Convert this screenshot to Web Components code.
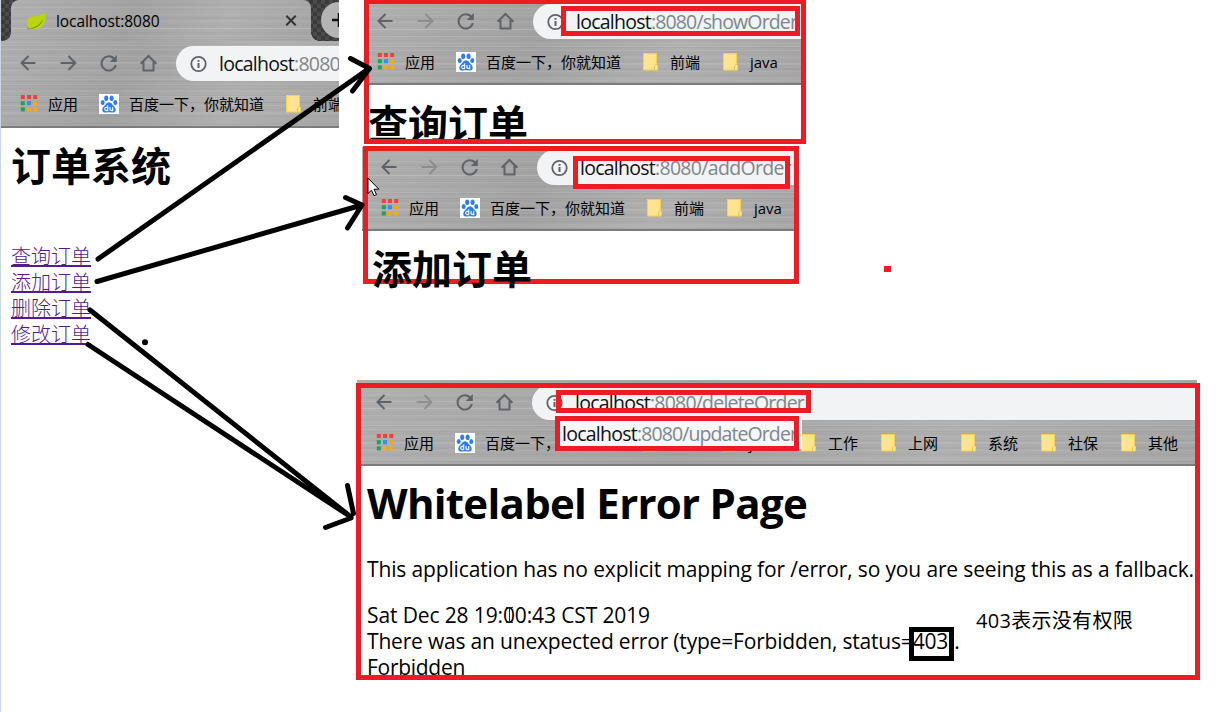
<!DOCTYPE html>
<html lang="zh">
<head>
<meta charset="utf-8">
<title>订单系统</title>
<style>
html,body{margin:0;background:#fff}
body{width:1216px;height:712px;overflow:hidden;font-family:"Open Sans","Noto Sans CJK SC",sans-serif;color:#000}
</style>
</head>
<body>
<order-board></order-board>
<script>
const define=(name,html,setup)=>{
  const t=document.createElement('template');t.innerHTML=html;
  customElements.define(name,class extends HTMLElement{
    connectedCallback(){
      if(this.shadowRoot)return;
      this.attachShadow({mode:'open'}).append(t.content.cloneNode(true));
      if(setup)setup(this,this.shadowRoot);
    }
  });
};

/* Spaces its text so that it spans the given width */
define('fit-text','<style>:host{display:inline-block;white-space:pre}span{display:inline-block}</style><span><slot></slot></span>',(el,r)=>{
  const s=r.querySelector('span'),w=+el.getAttribute('w');
  if(!w)return;
  const n=[...el.textContent].length;
  s.style.letterSpacing=(w-s.getBoundingClientRect().width)/n+'px';
});

const icons={
 back:'<path d="M17.500 10H4M10.500 3L3.500 10 10.500 17" stroke="currentColor" stroke-width="2" fill="none"/>',
 forward:'<path d="M2.500 10H16.500M10.500 3L17.300 10 10.500 17" stroke="currentColor" stroke-width="2" fill="none"/>',
 reload:'<path d="M16.500 6A7.200 7.200 0 1 0 17.800 12" stroke="currentColor" stroke-width="2" fill="none"/><path d="M18.800 2v7h-7z" fill="currentColor"/>',
 home:'<path d="M2.600 10.800L10.500 3l7.900 7.800M5.500 9v8.500h10V9" stroke="currentColor" stroke-width="2" fill="none"/>',
 info:'<circle cx="10.500" cy="10" r="7.200" stroke="currentColor" stroke-width="1.800" fill="none"/><path d="M10.500 9v5M10.500 6v1.800" stroke="currentColor" stroke-width="2"/>',
 close:'<path d="M5.300 4.800l9.400 9.400M14.700 4.800l-9.400 9.400" stroke="currentColor" stroke-width="2"/>',
 apps:[0,1,2].flatMap(y=>[0,1,2].map(x=>`<rect x="${2.800+x*6.200}" y="${1+y*6.200}" width="4" height="4" fill="${['#f33f3a','#f33f3a','#f33f3a','#22a05a','#2e90fa','#fca908','#22a05a','#fca908','#fca908'][y*3+x]}"/>`)).join(''),
 baidu:'<rect width="20" height="20" fill="#fff"/><g fill="#2b7cf6"><ellipse cx="7.200" cy="4.300" rx="2" ry="2.800"/><ellipse cx="12.600" cy="4.300" rx="2" ry="2.800"/><ellipse cx="3.700" cy="8.600" rx="2" ry="2.500"/><ellipse cx="16.300" cy="8.600" rx="2" ry="2.500"/><path d="M10 8.200C7.500 8.200 7 10.500 5 12.200 2.500 14.300 2.600 18.600 6.300 18.600c1.500 0 2-.4 3.700-.4s2.200.4 3.700.4c3.700 0 3.800-4.300 1.300-6.400-2-1.700-2.500-4-5-4z"/></g><path d="M8.700 11.200v5.500M8.700 13.400H7.300a1.600 1.600 0 0 0 0 3.200h1.400M11 13v2.600c0 1 .6 1 2.700 1V13" fill="none" stroke="#fff" stroke-width="1.100"/>',
 folder:'<path d="M2.500 1.500h13v11l1 1v4.500H2.500z" fill="#fee391" stroke="#fbd04e"/><path d="M13.500 18v-4l2-1.500" fill="none" stroke="#f7c744"/>',
 leaf:'<path d="M19 1C20 8 19.500 15 13 17.500 9 19 5 18 3 16.500-1 11 1 6 8 5.200 13 4.600 16 4.500 19 1z" fill="#bcd40d"/><path d="M1.500 17.500C9 17 14 14 17 7.500 16 15 8 19 1.500 17.500z" fill="#6d9a0b"/><path d="M1 16.500l2 2" stroke="#6d9a0b"/>'
};
define('ui-icon','<style>:host{display:block;width:20px;height:20px;flex:none}svg{display:block;width:100%;height:100%;overflow:visible}</style><svg viewBox="0 0 20 20"></svg>',(el,r)=>{
  r.querySelector('svg').innerHTML=icons[el.getAttribute('name')];
});

/* Navigation icons and the address field */
define('address-bar',`<style>
:host{display:flex;height:35px;color:#5f6368}
.nav{display:flex;gap:20px;padding:7px 18px 8px;flex:none;box-sizing:border-box;width:176px}
.field{flex:1;min-width:0;background:#f1f3f4;border-radius:18px 0 0 18px;display:flex;align-items:center;padding-left:12px}
.url{margin-left:11px;white-space:nowrap;display:flex}
:host([dim]) .fwd{opacity:.4}
</style><div class="nav"><ui-icon name="back"></ui-icon><ui-icon class="fwd" name="forward"></ui-icon><ui-icon name="reload"></ui-icon><ui-icon name="home"></ui-icon></div>
<div class="field"><ui-icon name="info"></ui-icon><div class="url"><slot></slot></div></div>`);

define('page-url',`<style>:host{display:flex;font:19.500px/26px "Open Sans",sans-serif;white-space:nowrap;color:#80868b}.h{color:#111}</style><fit-text class="h" w="75">localhost</fit-text><fit-text class="p"></fit-text>`,(el,r)=>{
  const p=r.querySelector('.p'),f=document.createElement('fit-text');
  f.textContent=el.getAttribute('path');f.setAttribute('w',el.getAttribute('w'));
  p.replaceWith(f);
});

define('book-mark',`<style>:host{display:flex;align-items:center;gap:var(--gap,10px);font:15px/20px "Open Sans","Noto Sans CJK SC",sans-serif;white-space:nowrap;flex:none}</style><ui-icon></ui-icon><slot></slot>`,(el,r)=>{
  const i=document.createElement('ui-icon');i.setAttribute('name',el.getAttribute('icon'));
  r.querySelector('ui-icon').replaceWith(i);
});

define('bookmark-bar',`<style>
:host{display:flex;height:46px;align-items:center;padding-left:18px;box-sizing:border-box;border-bottom:2px solid #7c7c7c}
book-mark{width:80px}
.apps{width:81px}.bd{width:185px}
.f{--gap:9px}
</style><book-mark class="apps" icon="apps">应用</book-mark><book-mark class="bd" icon="baidu">百度一下，你就知道</book-mark><slot></slot>`,(el,r)=>{
  el.getAttribute('folders').split(' ').forEach(n=>{
    const b=document.createElement('book-mark');b.className='f';b.setAttribute('icon','folder');b.textContent=n;
    if(n==='java')b.style.width='79px';
    r.append(b);
  });
});

const metal=`background-color:#a9a9a9;background-image:
repeating-linear-gradient(180deg,rgba(255,255,255,.07) 0 1px,transparent 1px 4px,rgba(0,0,0,.03) 4px 5px,transparent 5px 7px),
repeating-linear-gradient(180deg,rgba(0,0,0,.03) 0 1px,transparent 1px 11px,rgba(255,255,255,.1) 11px 12px,transparent 12px 17px),
linear-gradient(115deg,rgba(255,255,255,.08),rgba(0,0,0,.04) 40%,rgba(255,255,255,.08) 70%,rgba(0,0,0,.02));`;

/* A cropped piece of a browser window */
define('browser-clip',`<style>
:host{display:block;overflow:hidden}
.chrome{${metal}display:flex;flex-direction:column;overflow:hidden}
.row{margin-left:var(--shift,0px);display:flex;flex-direction:column;gap:var(--bar-gap,0px)}
</style><div class="chrome"><slot name="tabs"></slot><div class="row"><slot name="bar"></slot><slot name="marks"></slot></div></div><slot></slot>`);

define('tab-strip',`<style>
:host{display:flex;height:41px;box-sizing:border-box;background:#444 repeating-conic-gradient(#3a3a3a 0 25%,#4b4b4b 0 50%) 0 0/8px 8px;padding-left:10px;overflow:hidden}
.tab{${metal}position:relative;width:300px;flex:none;box-sizing:border-box;border-radius:8px 8px 0 0;display:flex;align-items:center;padding:0 10px 0 15px;font:15.500px/20px "Open Sans",sans-serif}
.tab::before,.tab::after{content:"";position:absolute;bottom:0;width:8px;height:8px}
.tab::before{left:-8px;background:radial-gradient(circle at 0 0,transparent 7.500px,#adadad 8px)}
.tab::after{right:-8px;background:radial-gradient(circle at 100% 0,transparent 7.500px,#adadad 8px)}
fit-text{margin-left:10px}
.x{margin-left:auto;color:#333}
.new{margin:2px 0 0 10px;width:36px;height:36px;flex:none;border-radius:50%;background:#b4b4b4;display:grid;place-items:center}
</style><div class="tab"><ui-icon name="leaf"></ui-icon><fit-text w="103.500">localhost:8080</fit-text><ui-icon class="x" name="close"></ui-icon></div>
<div class="new"><svg width="16" height="16"><path d="M8 1v14M1 8h14" stroke="#111" stroke-width="2.500"/></svg></div>`);

define('mark-frame','<style>:host{display:block;box-sizing:border-box;border:5px solid var(--ink,#ed1c24)}</style><slot></slot>');

define('order-links',`<style>:host{display:flex;flex-direction:column;align-items:flex-start}
a{font:300 20px/26px "Noto Sans CJK SC",sans-serif;color:#551a8b;text-decoration:none;height:26px;background:linear-gradient(#551a8b,#551a8b) 0 22px/100% 2px no-repeat}
</style><a>查询订单</a><a>添加订单</a><a>删除订单</a><a>修改订单</a>`);

define('ink-layer',`<style>:host{display:block;pointer-events:none}svg{display:block}</style>
<svg width="1216" height="712" fill="none" stroke="#000" stroke-width="5" stroke-linecap="round" stroke-linejoin="round">
<path d="M98 259L369 68.500M350.500 58.500L369.500 68.500L352.500 91"/>
<path d="M97 281.500L362 205M345.500 197.500L362 205L347.500 228"/>
<path d="M90 310L351 517M88 344.500L351 517M347.500 485.500L353.500 513.500M325.500 527.500L351 518"/>
<circle cx="145" cy="342.300" r="3" fill="#000" stroke="none"/>
<rect x="884" y="266" width="7" height="6" fill="#ed1c24" stroke="none"/>
<path d="M368 178.500v15l3.500-3.300 2.500 5.500 2.500-1-2.500-5.500h4.500z" fill="#fff" stroke="#000" stroke-width="1"/>
<path d="M506.500 607.500h2l1 1 1-1h2M509.500 608v14M506.500 622.500h2l1-1 1 1h2" stroke="#222" stroke-width="1"/>
</svg>`);

define('error-page',`<style>:host{display:flex;flex-direction:column;align-items:flex-start;padding-left:10px;font:21px/26px "Open Sans",sans-serif}
h1{margin:8px 0 0;font:700 42px/57px "Open Sans",sans-serif;height:57px}
p{margin:25px 0 20px}
fit-text,p{display:block}
</style><h1><fit-text w="440">Whitelabel Error Page</fit-text></h1><p><fit-text w="827">This application has no explicit mapping for /error, so you are seeing this as a fallback.</fit-text></p>
<fit-text w="283">Sat Dec 28 19:00:43 CST 2019</fit-text><fit-text w="592.500">There was an unexpected error (type=Forbidden, status=403).</fit-text><fit-text w="98">Forbidden</fit-text>`);

define('order-board',`<style>
:host{display:block;position:relative;width:1216px;height:712px;overflow:hidden;background:#fff}
:host>*{position:absolute}
.edge{left:0;top:0;width:1px;height:712px;background:#c9d6e6}
h1{margin:0;font:700 40px/50px "Noto Sans CJK SC",sans-serif;white-space:nowrap}
.a{left:1px;top:0;width:338px;height:360px;--bar-gap:1px;--shift:-1px}
.a address-bar{margin-top:5px}
.a h1{margin:11px 0 0 10px}
.a order-links{margin:54px 0 0 10px}
.b{left:366px;top:1px;width:436px;height:138px;--shift:-9px;--bar-gap:1px}
.b address-bar{margin-top:3px}
.b h1{margin:12px 0 0 2px}
.c{left:362px;top:147px;width:437px;height:143px;--shift:-1px;--bar-gap:1px}
.c address-bar{margin-top:3px}
.d{left:357px;top:380px;width:840px;height:297px;--shift:-1px;--bar-gap:1px}
.d address-bar{margin-top:5px}
.b bookmark-bar,.c bookmark-bar,.d bookmark-bar{height:45px}
.patch{left:556px;top:418px;width:246px;height:31px;background:#f4f6f8;overflow:hidden}
.patch page-url{margin:3px 0 0 6px}
.note{left:976px;top:607px;font:20px/28px "Open Sans","Noto Sans CJK SC",sans-serif}
</style>
<div class="edge"></div>
<browser-clip class="a"><tab-strip slot="tabs"></tab-strip><address-bar slot="bar"><page-url path=":8080" w="46"></page-url></address-bar><bookmark-bar slot="marks" folders="前端"></bookmark-bar><h1>订单系统</h1><order-links></order-links></browser-clip>
<browser-clip class="b"><address-bar dim slot="bar"><page-url path=":8080/showOrder" w="146"></page-url></address-bar><bookmark-bar slot="marks" folders="前端 java"></bookmark-bar><h1>查询订单</h1></browser-clip>
<mark-frame style="left:364px;top:-1px;width:442px;height:145px"></mark-frame>
<mark-frame style="left:561px;top:6px;width:239px;height:30px"></mark-frame>
<browser-clip class="c"><address-bar dim slot="bar"><page-url path=":8080/addOrder" w="136"></page-url></address-bar><bookmark-bar slot="marks" folders="前端 java"></bookmark-bar></browser-clip>
<mark-frame style="left:363px;top:146px;width:436px;height:138px"></mark-frame>
<h1 style="left:372px;top:242px;height:47px;overflow:hidden">添加订单</h1>
<mark-frame style="left:573px;top:156px;width:217px;height:33px"></mark-frame>
<browser-clip class="d"><address-bar dim slot="bar"><page-url path=":8080/deleteOrder" w="154"></page-url></address-bar><bookmark-bar slot="marks" folders="前端 java 工作 上网 系统 社保 其他"></bookmark-bar><error-page></error-page></browser-clip>
<mark-frame style="left:356px;top:383px;width:844px;height:297px"></mark-frame>
<mark-frame style="left:556px;top:390px;width:255px;height:23px"></mark-frame>
<div class="patch"><page-url path=":8080/updateOrder" w="160"></page-url></div>
<mark-frame style="left:555px;top:416px;width:244px;height:35px"></mark-frame>
<mark-frame style="left:909px;top:627px;width:45px;height:34px;--ink:#000"></mark-frame>
<fit-text class="note" w="157">403表示没有权限</fit-text>
<ink-layer style="left:0;top:0"></ink-layer>`);
</script>
</body>
</html>
